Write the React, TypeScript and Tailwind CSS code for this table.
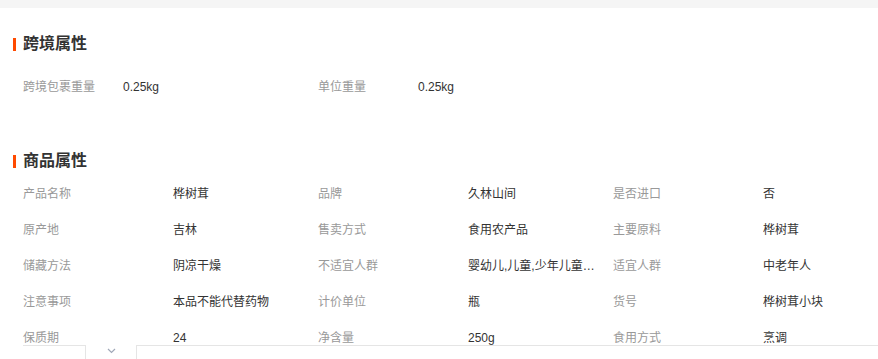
const FONT = "font-['Liberation_Sans','Noto_Sans_CJK_SC',sans-serif]";

const crossBorder = [
  { label: "跨境包裹重量", value: "0.25kg" },
  { label: "单位重量", value: "0.25kg" },
];

const attrs = [
  { label: "产品名称", value: "桦树茸" },
  { label: "品牌", value: "久林山间" },
  { label: "是否进口", value: "否" },
  { label: "原产地", value: "吉林" },
  { label: "售卖方式", value: "食用农产品" },
  { label: "主要原料", value: "桦树茸" },
  { label: "储藏方法", value: "阴凉干燥" },
  { label: "不适宜人群", value: "婴幼儿,儿童,少年儿童,孕妇,哺乳期妇女" },
  { label: "适宜人群", value: "中老年人" },
  { label: "注意事项", value: "本品不能代替药物" },
  { label: "计价单位", value: "瓶" },
  { label: "货号", value: "桦树茸小块" },
  { label: "保质期", value: "24" },
  { label: "净含量", value: "250g" },
  { label: "食用方式", value: "烹调" },
];

function SectionTitle({ title }: { title: string }) {
  return (
    <div className="flex h-5 items-center">
      <span className="ml-[13px] h-[13px] w-[3px] bg-[#ff4a00]" />
      <span className="ml-[7px] text-[16px] font-bold leading-5 text-[#333]">{title}</span>
    </div>
  );
}

export default function App() {
  return (
    <div className={`${FONT} h-[359px] w-[878px] overflow-hidden bg-white`}>
      <div className="h-2 bg-[#f5f5f5]" />

      <div className="mt-[26px]">
        <SectionTitle title="跨境属性" />
      </div>

      <div className="mt-[15px] flex h-9 items-center pl-[23px] text-[12px]">
        {crossBorder.map((item) => (
          <div key={item.label} className="flex w-[295px] items-center">
            <span className="w-[100px] text-[#999]">{item.label}</span>
            <span className="text-[#333]">{item.value}</span>
          </div>
        ))}
      </div>

      <div className="mt-[46px]">
        <SectionTitle title="商品属性" />
      </div>

      <div className="mt-[5px] grid h-[169px] grid-cols-[295px_295px_265px] overflow-hidden pl-[23px] text-[12px]">
        {attrs.map((item) => (
          <div key={item.label} className="flex h-9 items-center">
            <span className="w-[150px] shrink-0 text-[#999]">{item.label}</span>
            <span className="w-[128px] truncate text-[#333]">{item.value}</span>
          </div>
        ))}
      </div>

      <div className="flex h-[14px] pl-[23px]">
        <div className="w-[62px] border-t border-[#e5e5e5]" />
        <button className="flex w-[52px] justify-center border-x border-[#e5e5e5] pt-[3px]">
          <svg width="9" height="6" viewBox="0 0 9 6" fill="none">
            <path d="M1 1l3.5 3.5L8 1" stroke="#a0a8b8" strokeWidth="1.2" />
          </svg>
        </button>
        <div className="flex-1 border-t border-[#e5e5e5]" />
      </div>
    </div>
  );
}
